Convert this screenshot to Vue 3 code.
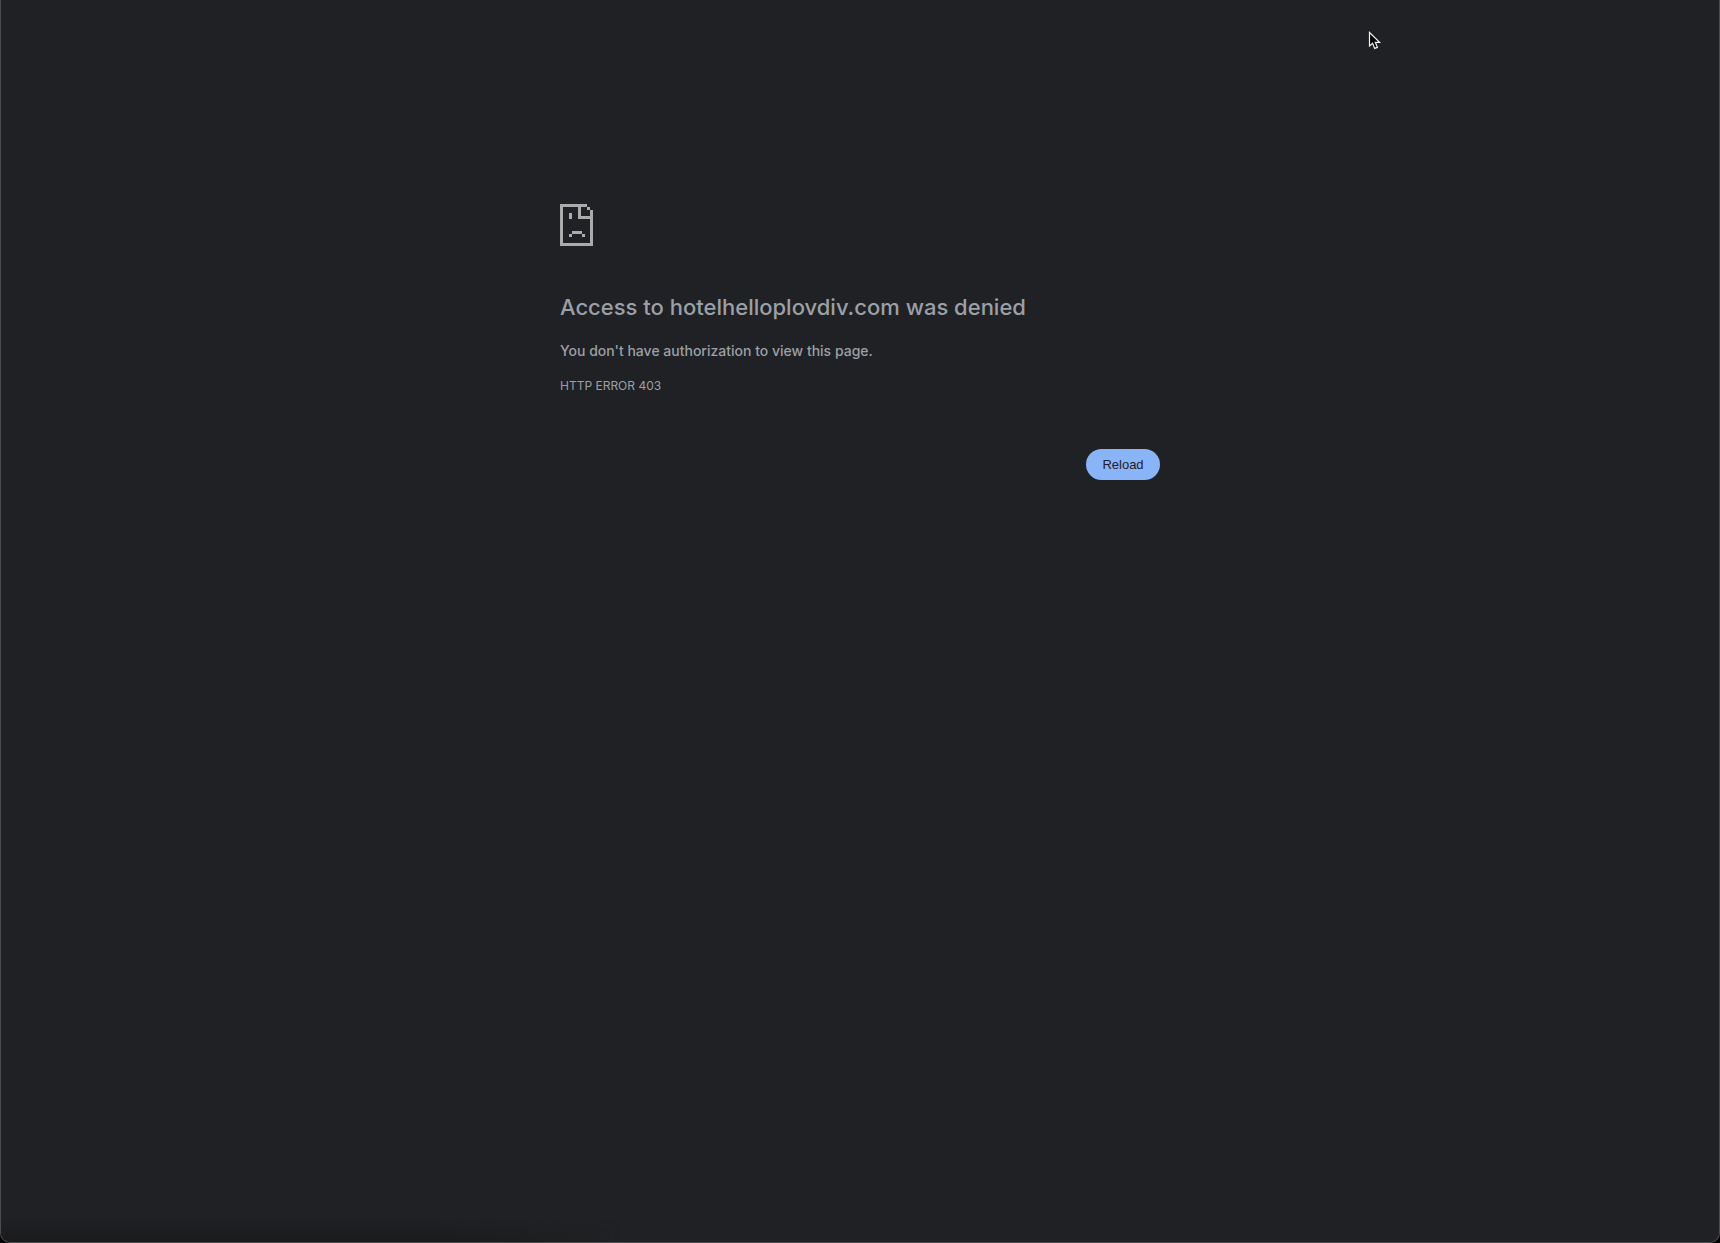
<script setup>
const host = 'hotelhelloplovdiv.com'
const reload = () => window.location.reload()
</script>

<template>
  <div class="window">
    <main class="error-page">
      <svg class="icon" viewBox="0 0 33 42" shape-rendering="crispEdges" aria-hidden="true">
        <path
          fill="#ababab"
          d="M0 0h27v3h3v3h3v36H0zM3 3v36h27V15H18V3zM21 3v9h9V6H27V3zM9 9h3v6H9zM12 27h10v3H12zM9 30h3v3H9zM22 30h3v3H22z"
          fill-rule="evenodd"
        />
      </svg>
      <h1>Access to {{ host }} was denied</h1>
      <p class="summary">You don't have authorization to view this page.</p>
      <p class="code">HTTP ERROR 403</p>
      <div class="actions">
        <button type="button" @click="reload">Reload</button>
      </div>
    </main>
    <svg class="pointer" viewBox="0 0 14 20" aria-hidden="true">
      <path
        d="M1.5 1.5V15L4.6 12.3L6.7 17.4L9.4 16.3L7.3 11.3H11.6Z"
        fill="#000"
        stroke="#f2f2f2"
        stroke-width="1.2"
      />
    </svg>
  </div>
</template>

<style>
body {
  background: #000;
}
</style>

<style scoped>
.window {
  position: relative;
  box-sizing: border-box;
  min-height: 100vh;
  padding: 204px 24px 0;
  border: 1px solid #4b4c4e;
  border-top: 0;
  border-radius: 0 0 10px 10px;
  background: #202124;
  color: #9aa0a6;
  font-family: Inter, "Liberation Sans", sans-serif;
  overflow: hidden;
}

.window::after {
  content: "";
  position: absolute;
  left: 0;
  bottom: 0;
  width: 36%;
  height: 24px;
  background: linear-gradient(to top, #1b1b1c, transparent);
  mask-image: linear-gradient(to right, #000 70%, transparent);
}

.error-page {
  max-width: 600px;
  margin: 0 auto;
}

.icon {
  display: block;
  width: 33px;
  height: 42px;
}

h1 {
  margin: 46px 0 0;
  font-size: 22px;
  font-weight: 500;
  line-height: 30px;
}

p {
  margin: 0;
}

.summary {
  margin-top: 17px;
  font-size: 14px;
  font-weight: 500;
  line-height: 24px;
}

.code {
  margin-top: 14px;
  font-size: 12px;
  line-height: 18px;
}

.actions {
  display: flex;
  justify-content: flex-end;
  margin-top: 54px;
}

button {
  min-width: 74px;
  padding: 8px 16px;
  border: 0;
  border-radius: 20px;
  background: #8ab4f8;
  color: #202124;
  font-family: "Liberation Sans", Arial, sans-serif;
  font-size: 13px;
  line-height: 15px;
  cursor: pointer;
}

.pointer {
  position: absolute;
  top: 31px;
  right: 337px;
  width: 14px;
  height: 20px;
}
</style>
